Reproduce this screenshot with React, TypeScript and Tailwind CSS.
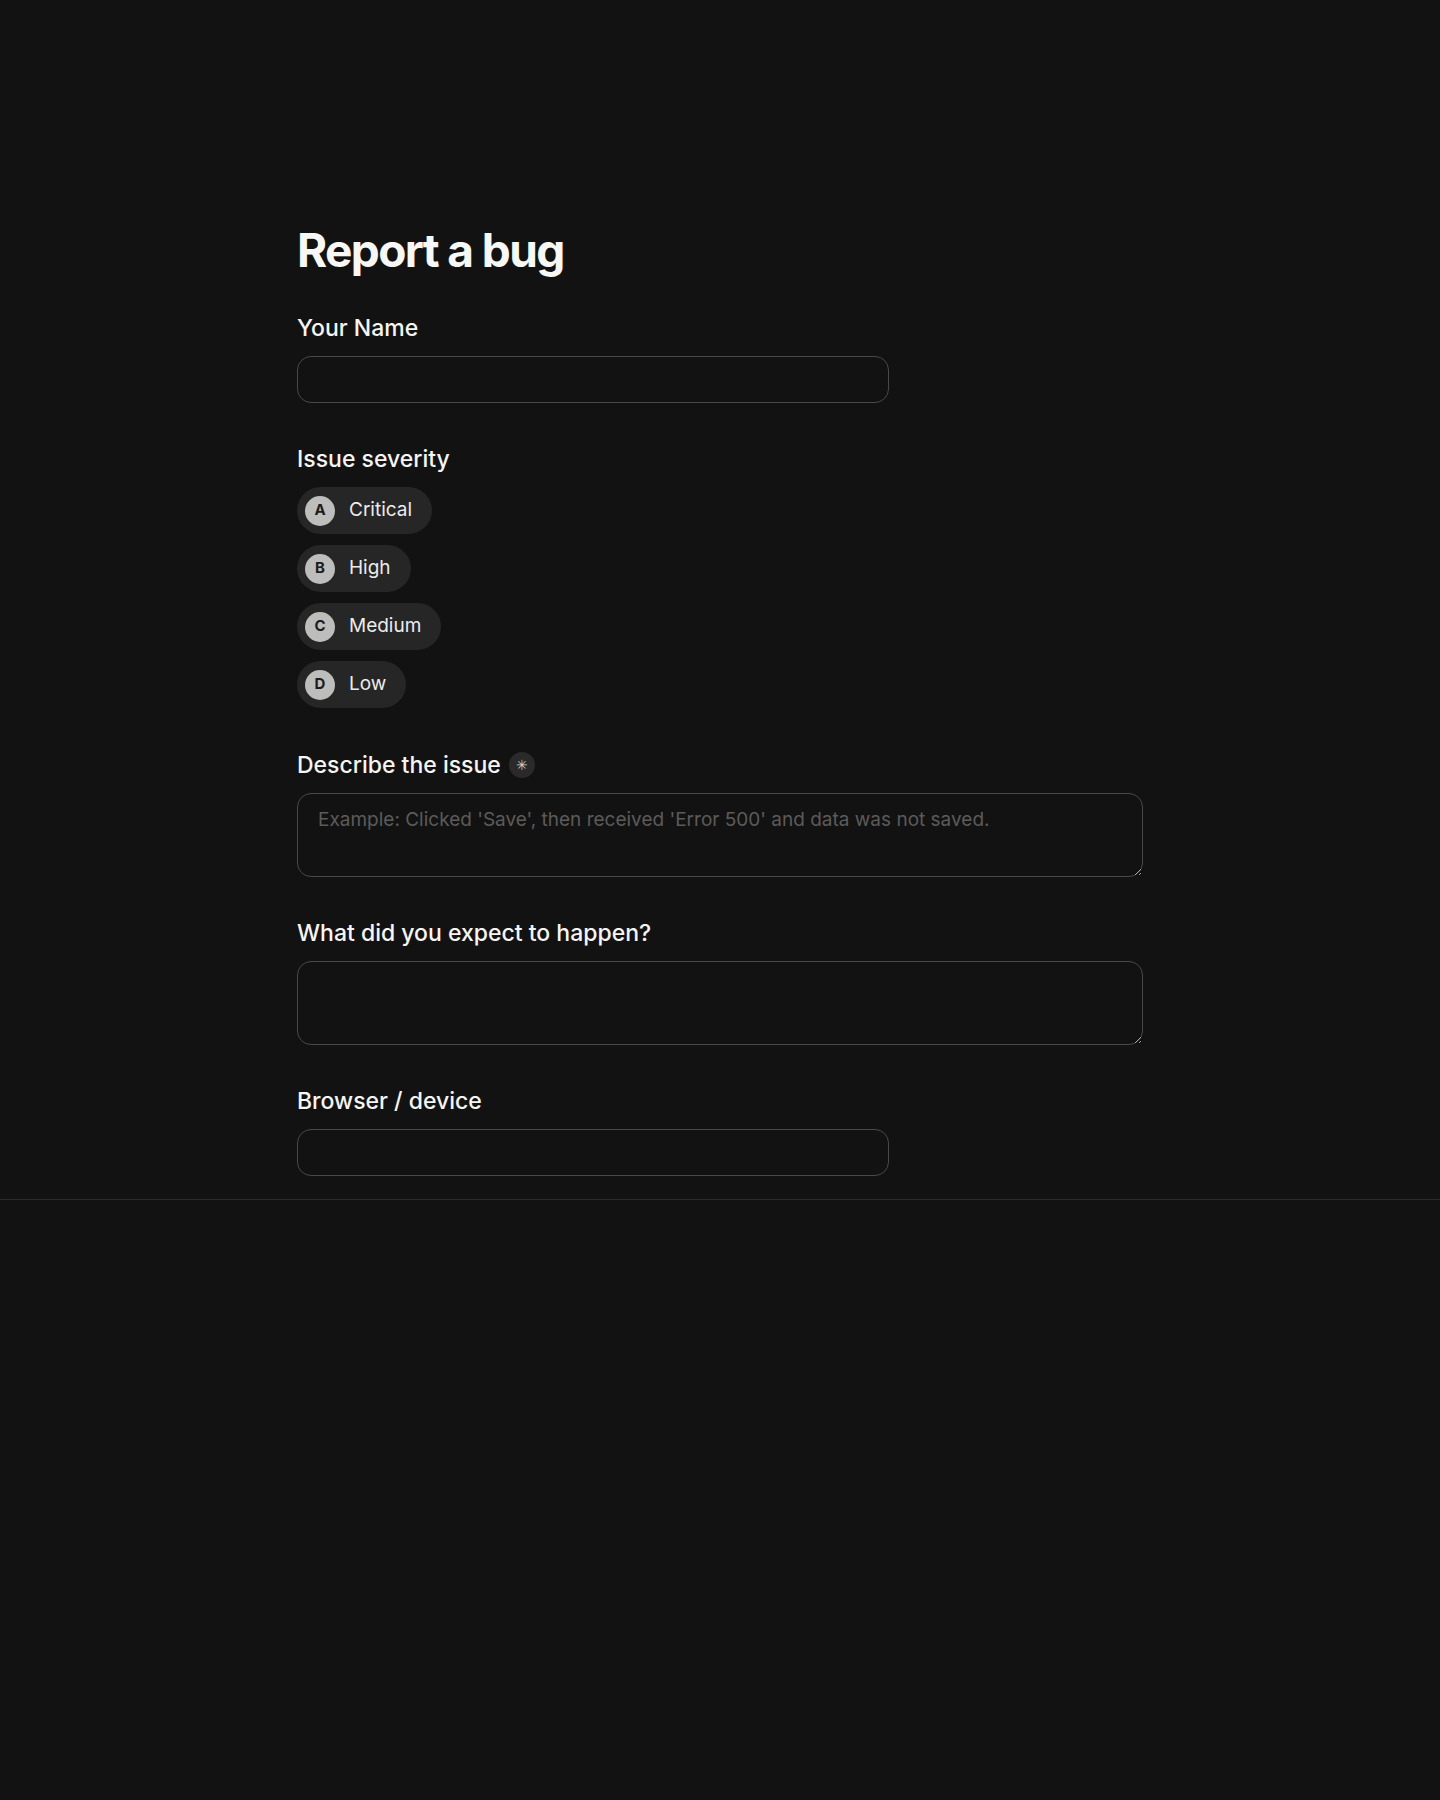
import React from "react";

const severities = [
  { key: "A", label: "Critical" },
  { key: "B", label: "High" },
  { key: "C", label: "Medium" },
  { key: "D", label: "Low" },
];

function Label({ children }: { children: React.ReactNode }) {
  return (
    <div className="mb-[14px] flex items-center gap-2 text-[23px] font-medium leading-[28px] text-[#f5f5f4]">
      {children}
    </div>
  );
}

export default function App() {
  return (
    <div
      className="min-h-screen bg-[#131212] text-white"
      style={{ fontFamily: "Inter, 'Noto Sans', sans-serif" }}
    >
      <div className="border-b border-[#2a2a2a]">
        <div className="mx-auto flex w-[846px] flex-col pb-[23px] pt-[227px]">
          <h1 className="text-[46px] font-bold leading-[46px] tracking-[-0.035em] text-[#f7f7f5]">
            Report a bug
          </h1>

          <div className="mt-[41px]">
            <Label>Your Name</Label>
            <input
              type="text"
              className="h-[47px] w-[592px] rounded-[14px] border border-[#4a4948] bg-transparent px-5 text-lg text-white outline-none"
            />
          </div>

          <div className="mt-[42px]">
            <Label>Issue severity</Label>
            <div className="flex flex-col items-start gap-[11px]">
              {severities.map((s) => (
                <button
                  key={s.key}
                  type="button"
                  className="flex h-[47px] items-center gap-[14px] rounded-full bg-[#262626] pl-2 pr-5"
                >
                  <span className="flex h-[30px] w-[30px] items-center justify-center rounded-full bg-[#bdbdbc] text-[15px] font-bold text-[#1c1c1c]">
                    {s.key}
                  </span>
                  <span className="text-[19px] text-[#ececec]">{s.label}</span>
                </button>
              ))}
            </div>
          </div>

          <div className="mt-[43px]">
            <Label>
              <span>Describe the issue</span>
              <span className="flex h-[26px] w-[26px] items-center justify-center rounded-full bg-[#2a2a2a] text-[14px] leading-none text-[#cfcfcf]">
                ✳
              </span>
            </Label>
            <textarea
              placeholder="Example: Clicked 'Save', then received 'Error 500' and data was not saved."
              className="block h-[84px] w-full resize-y rounded-[14px] border border-[#4a4948] bg-transparent px-5 py-3 text-[19px] leading-7 text-white outline-none placeholder:text-[#5c5b5a]"
            />
          </div>

          <div className="mt-[42px]">
            <Label>What did you expect to happen?</Label>
            <textarea className="block h-[84px] w-full resize-y rounded-[14px] border border-[#4a4948] bg-transparent px-5 py-3 text-[19px] leading-7 text-white outline-none" />
          </div>

          <div className="mt-[42px]">
            <Label>Browser / device</Label>
            <input
              type="text"
              className="h-[47px] w-[592px] rounded-[14px] border border-[#4a4948] bg-transparent px-5 text-lg text-white outline-none"
            />
          </div>
        </div>
      </div>
    </div>
  );
}
